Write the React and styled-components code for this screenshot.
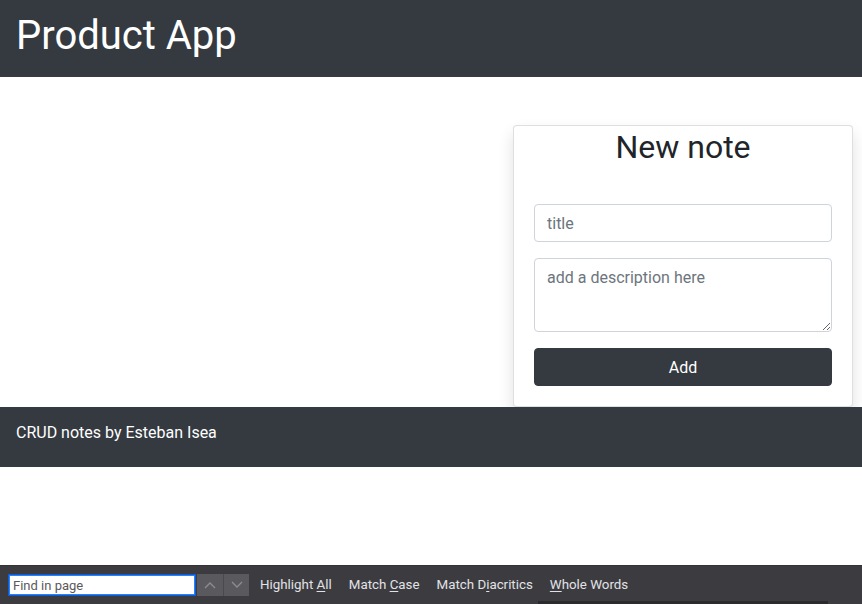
import React, { useState } from "react";
import styled, { createGlobalStyle } from "styled-components";

const GlobalStyle = createGlobalStyle`
  * { box-sizing: border-box; }
  html, body { margin: 0; padding: 0; background: #fff; }
  body {
    font-family: Roboto, "Liberation Sans", sans-serif;
    font-size: 16px;
    line-height: 1.5;
    color: #212529;
  }
`;

const Page = styled.div`
  width: 862px;
  height: 604px;
  display: flex;
  flex-direction: column;
  overflow: hidden;
`;

const Header = styled.header`
  background: #343a40;
  height: 77px;
  padding: 12px 16px 0;
`;

const Brand = styled.h1`
  margin: 0;
  font-size: 40px;
  font-weight: 400;
  line-height: 1.2;
  color: #fff;
`;

const Main = styled.main`
  display: flex;
  justify-content: flex-end;
  padding: 48px 9px 0 0;
`;

const Card = styled.div`
  width: 340px;
  background: #fff;
  border: 1px solid rgba(0, 0, 0, 0.125);
  border-radius: 4px;
  box-shadow: 0 8px 16px rgba(0, 0, 0, 0.12);
  padding: 0 20px 20px;
  display: flex;
  flex-direction: column;
`;

const CardTitle = styled.h2`
  margin: 2px 0 38px;
  font-size: 32px;
  font-weight: 400;
  line-height: 1.2;
  text-align: center;
`;

const Field = styled.input`
  display: block;
  width: 100%;
  height: 38px;
  padding: 6px 12px;
  font-family: inherit;
  font-size: 16px;
  color: #495057;
  border: 1px solid #ced4da;
  border-radius: 4px;
  margin-bottom: 16px;
  &::placeholder { color: #6c757d; }
`;

const Area = styled.textarea`
  display: block;
  width: 100%;
  height: 74px;
  padding: 7px 12px 6px;
  font-family: inherit;
  font-size: 16px;
  line-height: 1.5;
  color: #495057;
  border: 1px solid #ced4da;
  border-radius: 4px;
  margin: 0 0 16px;
  resize: vertical;
  &::placeholder { color: #6c757d; }
`;

const Button = styled.button`
  display: block;
  width: 100%;
  height: 38px;
  border: 1px solid #343a40;
  border-radius: 4px;
  background: #343a40;
  color: #fff;
  font-family: inherit;
  font-size: 16px;
`;

const Footer = styled.footer`
  height: 60px;
  background: #343a40;
  color: #fff;
  padding: 14px 16px;
`;

const Spacer = styled.div`
  flex: 1;
`;

const FindBar = styled.div`
  position: relative;
  height: 39px;
  background: #3c3c40;
  border-top: 1px solid #333337;
  display: flex;
  align-items: center;
  padding: 0 8px;
  font-family: Roboto, "Liberation Sans", sans-serif;
  font-size: 13.33px;
  color: #e2e2e6;
`;

const FindInput = styled.input`
  width: 188px;
  height: 22px;
  border: 1px solid #0060df;
  box-shadow: inset 0 0 0 1px #3b7be8;
  background: #fff;
  padding: 0 4px;
  font-family: inherit;
  font-size: 13px;
  outline: none;
  &::placeholder { color: #5a5a5a; }
`;

const Arrow = styled.span`
  width: 26px;
  height: 22px;
  background: #5a5a5e;
  margin-left: ${p => (p.$first ? "1px" : "0")};
  border-left: ${p => (p.$first ? "none" : "1px solid #4a4a4e")};
  display: flex;
  align-items: center;
  justify-content: center;
`;

const Option = styled.span`
  margin-left: ${p => p.$gap}px;
  white-space: nowrap;
  u { text-decoration-thickness: 1px; text-underline-offset: 2px; }
`;

const BottomEdge = styled.div`
  position: absolute;
  left: 538px;
  bottom: 0;
  width: 290px;
  height: 3px;
  background: #2b2b2e;
`;

const Chevron = ({ up }) => (
  <svg width="12" height="8" viewBox="0 0 12 8" fill="none">
    <path
      d={up ? "M1 7 L6 2 L11 7" : "M1 1 L6 6 L11 1"}
      stroke="#8c8c92"
      strokeWidth="1.3"
    />
  </svg>
);

export default function App() {
  const [title, setTitle] = useState("");
  const [desc, setDesc] = useState("");

  return (
    <Page>
      <GlobalStyle />
      <Header>
        <Brand>Product App</Brand>
      </Header>
      <Main>
        <Card>
          <CardTitle>New note</CardTitle>
          <Field
            placeholder="title"
            value={title}
            onChange={e => setTitle(e.target.value)}
          />
          <Area
            placeholder="add a description here"
            value={desc}
            onChange={e => setDesc(e.target.value)}
          />
          <Button>Add</Button>
        </Card>
      </Main>
      <Footer>CRUD notes by Esteban Isea</Footer>
      <Spacer />
      <FindBar>
        <FindInput placeholder="Find in page" />
        <Arrow $first><Chevron up /></Arrow>
        <Arrow><Chevron /></Arrow>
        <Option $gap={11}>Highlight <u>A</u>ll</Option>
        <Option $gap={17}>Match <u>C</u>ase</Option>
        <Option $gap={17}>Match D<u>i</u>acritics</Option>
        <Option $gap={17}><u>W</u>hole Words</Option>
        <BottomEdge />
      </FindBar>
    </Page>
  );
}
